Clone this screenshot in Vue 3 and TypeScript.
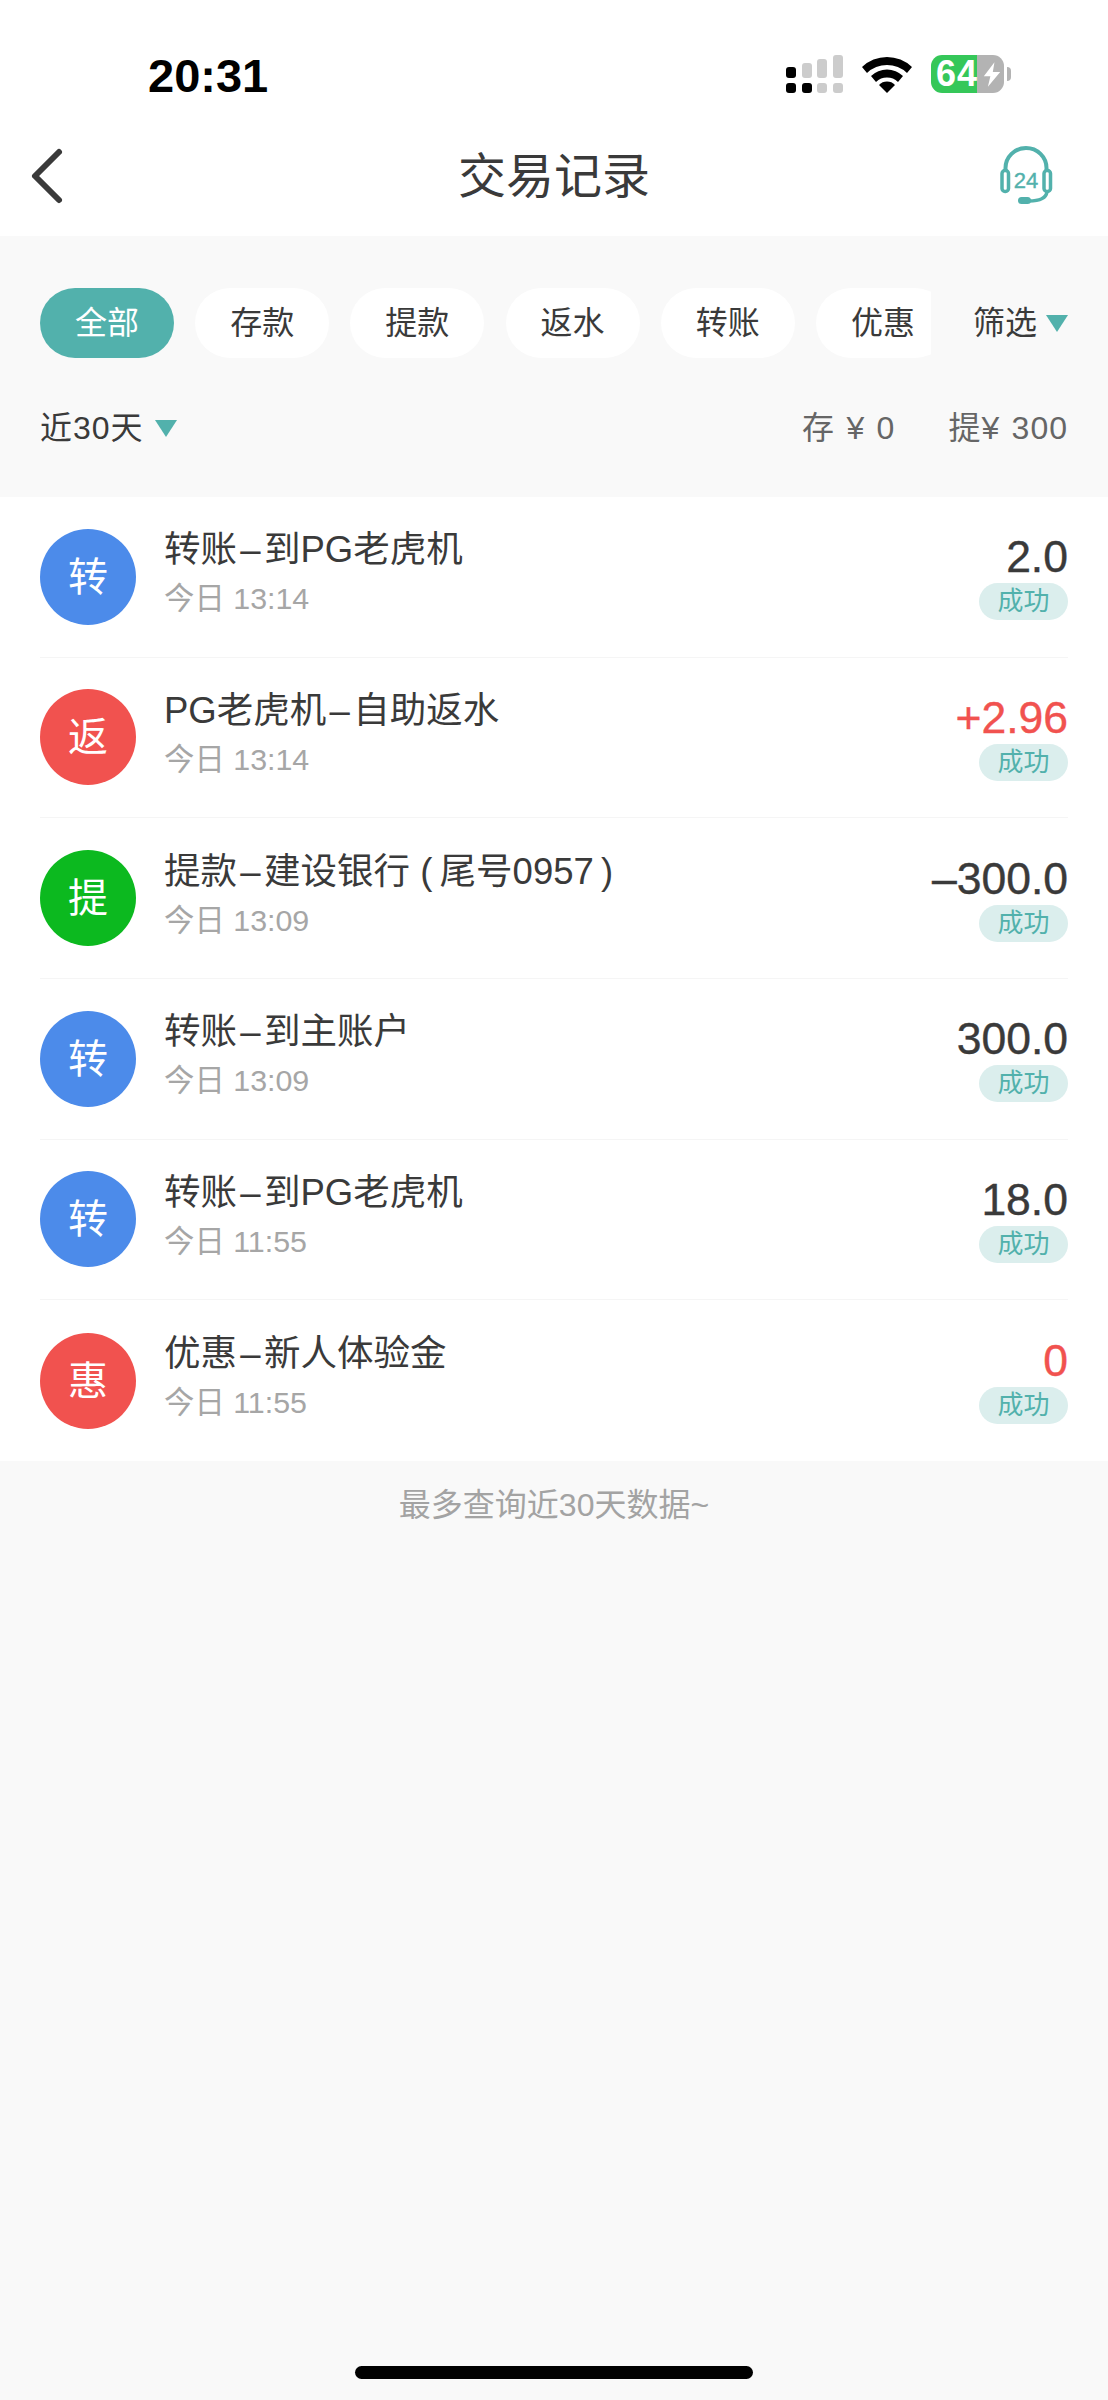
<script setup lang="ts">
interface Row {
  icon: string
  color: string
  from: string
  to: string
  time: string
  amount: string
  red?: boolean
}
const chips: string[] = ['全部', '存款', '提款', '返水', '转账', '优惠']
const rows: Row[] = [
  { icon: '转', color: '#4c8bea', from: '转账', to: '到PG老虎机', time: '今日 13:14', amount: '2.0' },
  { icon: '返', color: '#f1524f', from: 'PG老虎机', to: '自助返水', time: '今日 13:14', amount: '+2.96', red: true },
  { icon: '提', color: '#0cb91f', from: '提款', to: '建设银行 (\u2009尾号0957\u2009)', time: '今日 13:09', amount: '–300.0' },
  { icon: '转', color: '#4c8bea', from: '转账', to: '到主账户', time: '今日 13:09', amount: '300.0' },
  { icon: '转', color: '#4c8bea', from: '转账', to: '到PG老虎机', time: '今日 11:55', amount: '18.0' },
  { icon: '惠', color: '#f1524f', from: '优惠', to: '新人体验金', time: '今日 11:55', amount: '0', red: true }
]
</script>

<template>
  <div class="page">
    <div class="top">
      <div class="status">
        <span class="clock">20:31</span>
        <div class="status-icons">
          <svg width="57" height="38" viewBox="0 0 57 38">
            <rect x="0" y="12" width="10" height="11" rx="3" fill="#000" />
            <rect x="0" y="28" width="10" height="10" rx="3" fill="#000" />
            <rect x="16" y="8" width="10" height="15" rx="3" fill="#ccc" />
            <rect x="16" y="28" width="10" height="10" rx="3" fill="#000" />
            <rect x="31" y="4" width="10" height="19" rx="3" fill="#ccc" />
            <rect x="31" y="28" width="10" height="10" rx="3" fill="#ccc" />
            <rect x="47" y="0" width="10" height="23" rx="3" fill="#ccc" />
            <rect x="47" y="28" width="10" height="10" rx="3" fill="#ccc" />
          </svg>
          <svg class="wifi" width="50" height="37" viewBox="0 0 50 37">
            <path d="M0 11 A36 36 0 0 1 50 11 L45 17 A29 29 0 0 0 5 17 Z" fill="#000" />
            <path d="M9 20 A23 23 0 0 1 41 20 L36 26 A16 16 0 0 0 14 26 Z" fill="#000" />
            <path d="M17 29 A11 11 0 0 1 33 29 L25 37 Z" fill="#000" />
          </svg>
          <div class="battery">
            <div class="batt-body">
              <span class="batt-num">64</span>
              <svg class="bolt" width="18" height="25" viewBox="0 0 22 30">
                <path d="M14 0 L1 17 H9 L6 30 L21 12 H12 Z" fill="#fff" />
              </svg>
            </div>
            <span class="batt-tip"></span>
          </div>
        </div>
      </div>
      <div class="nav">
        <svg class="back" width="40" height="64" viewBox="0 0 40 64">
          <path d="M31 8 L7 32 L31 56" fill="none" stroke="#3a3a3a" stroke-width="6" stroke-linecap="round" stroke-linejoin="round" />
        </svg>
        <h1 class="nav-title">交易记录</h1>
        <svg class="head" width="54" height="60" viewBox="0 0 54 60">
          <path d="M5.5 25 V22 A20.5 20 0 0 1 46.5 22 V25" fill="none" stroke="#52b1ac" stroke-width="4" />
          <rect x="2" y="24.5" width="6.5" height="21" rx="3" fill="none" stroke="#52b1ac" stroke-width="3.5" />
          <rect x="44" y="24.5" width="6.5" height="21" rx="3" fill="none" stroke="#52b1ac" stroke-width="3.5" />
          <path d="M47 46 C46 52 41 55 29 55" fill="none" stroke="#52b1ac" stroke-width="3.5" />
          <rect x="18" y="51" width="13" height="7" rx="3.5" fill="#52b1ac" />
          <text x="26" y="42" text-anchor="middle" class="head-text">24</text>
        </svg>
      </div>
    </div>

    <div class="filters">
      <div class="chip-row">
        <div class="chips">
          <span v-for="(c, i) in chips" :key="c" class="chip" :class="{ on: i === 0 }">{{ c }}</span>
        </div>
        <div class="select">筛选<i class="tri"></i></div>
      </div>
      <div class="sum-row">
        <div class="select days">近30天<i class="tri"></i></div>
        <div class="sums">
          <span>存 ¥ 0</span>
          <span>提¥ 300</span>
        </div>
      </div>
    </div>

    <ul class="list">
      <li v-for="(r, i) in rows" :key="i" class="row">
        <span class="avatar" :style="{ background: r.color }">{{ r.icon }}</span>
        <div class="info">
          <div class="title">{{ r.from }}<span class="dash">–</span>{{ r.to }}</div>
          <div class="time">{{ r.time }}</div>
        </div>
        <div class="right">
          <div class="amount" :class="{ red: r.red }">{{ r.amount }}</div>
          <span class="badge">成功</span>
        </div>
      </li>
    </ul>

    <p class="foot">最多查询近30天数据~</p>
    <div class="home"></div>
  </div>
</template>

<style scoped>
.page {
  position: relative;
  width: 1108px;
  height: 2400px;
  background: #f9f9f9;
  font-family: "Liberation Sans", "Noto Sans CJK SC", sans-serif;
  color: #3a3a3a;
  overflow: hidden;
}
.top {
  height: 236px;
  background: #fff;
}
.status {
  height: 130px;
  display: flex;
  justify-content: space-between;
  padding: 0 97px 0 148px;
}
.clock {
  margin-top: 51px;
  font-size: 47px;
  line-height: 50px;
  font-weight: 700;
  color: #000;
}
.status-icons {
  display: flex;
  align-items: flex-start;
  padding-top: 55px;
}
.wifi {
  margin: 1px 0 0 19px;
}
.battery {
  display: flex;
  align-items: center;
  margin-left: 19px;
}
.batt-body {
  position: relative;
  width: 73px;
  height: 38px;
  border-radius: 11px;
  background: linear-gradient(90deg, #35c759 63%, #b3b3b3 63%);
  display: flex;
  align-items: center;
}
.batt-num {
  margin-left: 5px;
  font-size: 36px;
  line-height: 38px;
  letter-spacing: 1px;
  font-weight: 700;
  color: #fff;
}
.bolt {
  position: absolute;
  left: 52px;
  top: 7px;
}
.batt-tip {
  width: 4px;
  height: 14px;
  margin-left: 3px;
  border-radius: 0 5px 5px 0;
  background: #b3b3b3;
}
.nav {
  position: relative;
  height: 106px;
  display: flex;
  align-items: center;
  justify-content: space-between;
  padding: 0 54px 14px 28px;
  box-sizing: border-box;
}
.nav-title {
  position: absolute;
  left: 0;
  right: 0;
  top: 17px;
  margin: 0;
  text-align: center;
  font-size: 48px;
  line-height: 60px;
  font-weight: 400;
  color: #3a3a3a;
}
.head-text {
  font-size: 22px;
  fill: #52b1ac;
  stroke: #52b1ac;
  stroke-width: 0.4px;
  font-family: "Liberation Sans", sans-serif;
}
.filters {
  height: 261px;
  padding: 52px 40px 0 40px;
  box-sizing: border-box;
}
.chip-row {
  display: flex;
  align-items: center;
  justify-content: space-between;
}
.chips {
  display: flex;
  gap: 21.2px;
  width: 891px;
  overflow: hidden;
}
.chip {
  flex: none;
  width: 134px;
  height: 70px;
  border-radius: 35px;
  background: #fff;
  text-align: center;
  font-size: 32px;
  line-height: 70px;
  color: #3a3a3a;
}
.chip.on {
  background: #52b1ac;
  color: #fff;
}
.select {
  display: flex;
  align-items: center;
  font-size: 32px;
  line-height: 44px;
  color: #3a3a3a;
}
.tri {
  width: 0;
  height: 0;
  margin-left: 9px;
  border-left: 11.5px solid transparent;
  border-right: 11.5px solid transparent;
  border-top: 17px solid #52b1ac;
}
.sum-row {
  display: flex;
  align-items: center;
  justify-content: space-between;
  margin-top: 48px;
}
.days {
  letter-spacing: 1px;
}
.days .tri {
  margin-left: 11px;
}
.sums {
  display: flex;
  gap: 53px;
  font-size: 32px;
  line-height: 44px;
  letter-spacing: 1px;
  word-spacing: 1.5px;
  color: #666;
}
.list {
  margin: 0;
  padding: 0;
  list-style: none;
  background: #fff;
}
.row {
  height: 160.67px;
  margin-left: 40px;
  margin-right: 40px;
  box-sizing: border-box;
  display: flex;
  align-items: center;
  border-bottom: 1px solid #f5f5f5;
}
.row:last-child {
  border-bottom: 0;
}
.avatar {
  flex: none;
  width: 96px;
  height: 96px;
  border-radius: 50%;
  color: #fff;
  text-align: center;
  font-size: 40px;
  line-height: 96px;
}
.info {
  flex: 1;
  margin-left: 28px;
  padding-bottom: 8px;
}
.title {
  font-size: 36.5px;
  line-height: 50px;
  color: #3a3a3a;
}
.dash {
  display: inline-block;
  width: 27px;
  text-align: center;
}
.time {
  margin-top: 1px;
  font-size: 30.4px;
  line-height: 44px;
  color: #a6a6a6;
}
.right {
  display: flex;
  flex-direction: column;
  align-items: flex-end;
  padding-bottom: 2px;
}
.amount {
  font-size: 44.5px;
  line-height: 52px;
  -webkit-text-stroke: 0.4px currentColor;
  color: #3a3a3a;
}
.amount.red {
  color: #f1524f;
}
.badge {
  width: 89px;
  height: 37px;
  border-radius: 19px;
  background: #dbeeed;
  text-align: center;
  font-size: 26px;
  line-height: 37px;
  color: #52b1ac;
}
.foot {
  margin: 0;
  padding-top: 22px;
  text-align: center;
  font-size: 32px;
  line-height: 44px;
  color: #a3a3a3;
}
.home {
  position: absolute;
  left: 355px;
  bottom: 21px;
  width: 398px;
  height: 13px;
  border-radius: 7px;
  background: #000;
}
</style>
